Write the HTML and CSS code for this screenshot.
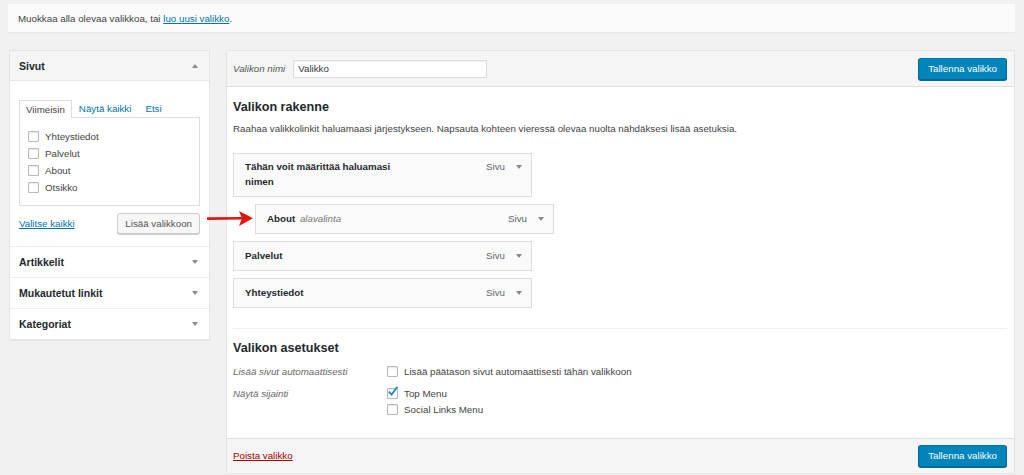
FILE: index.html
```html
<!DOCTYPE html>
<html lang="fi">
<head>
<meta charset="utf-8">
<title>Valikot</title>
<link rel="stylesheet" href="styles.css">
</head>
<body>
<div class="notice"><p>Muokkaa alla olevaa valikkoa, tai <a href="#">luo uusi valikko</a>.</p></div>

<div class="main">
  <aside class="sidebar">
    <div class="acc open">
      <div class="acc-head">Sivut <span class="tri up"></span></div>
      <div class="acc-body">
        <div class="tabs">
          <span class="tab active">Viimeisin</span>
          <a class="tab" href="#">Näytä kaikki</a>
          <a class="tab" href="#">Etsi</a>
        </div>
        <div class="tabpanel">
          <label class="cb-row"><span class="cb"></span>Yhteystiedot</label>
          <label class="cb-row"><span class="cb"></span>Palvelut</label>
          <label class="cb-row"><span class="cb"></span>About</label>
          <label class="cb-row"><span class="cb"></span>Otsikko</label>
        </div>
        <div class="actions">
          <a href="#">Valitse kaikki</a>
          <button class="btn">Lisää valikkoon</button>
        </div>
      </div>
    </div>
    <div class="acc"><div class="acc-head">Artikkelit <span class="tri"></span></div></div>
    <div class="acc"><div class="acc-head">Mukautetut linkit <span class="tri"></span></div></div>
    <div class="acc"><div class="acc-head">Kategoriat <span class="tri"></span></div></div>
  </aside>

  <section class="editor">
    <div class="ed-head">
      <label class="name-label">Valikon nimi</label>
      <input class="name-input" type="text" value="Valikko">
      <button class="btn primary">Tallenna valikko</button>
    </div>
    <div class="ed-body">
      <h3>Valikon rakenne</h3>
      <p class="desc">Raahaa valikkolinkit haluamaasi järjestykseen. Napsauta kohteen vieressä olevaa nuolta nähdäksesi lisää asetuksia.</p>
      <ul class="menu">
        <li class="item"><span class="title">Tähän voit määrittää haluamasi nimen</span><span class="controls"><span class="type">Sivu</span><span class="tri"></span></span></li>
        <li class="item sub"><span class="title">About <i class="subtitle">alavalinta</i></span><span class="controls"><span class="type">Sivu</span><span class="tri"></span></span></li>
        <li class="item"><span class="title">Palvelut</span><span class="controls"><span class="type">Sivu</span><span class="tri"></span></span></li>
        <li class="item"><span class="title">Yhteystiedot</span><span class="controls"><span class="type">Sivu</span><span class="tri"></span></span></li>
      </ul>
      <div class="settings">
        <h3>Valikon asetukset</h3>
        <div class="row">
          <div class="lbl">Lisää sivut automaattisesti</div>
          <div class="opts">
            <label class="cb-row"><span class="cb"></span>Lisää päätason sivut automaattisesti tähän valikkoon</label>
          </div>
        </div>
        <div class="row">
          <div class="lbl">Näytä sijainti</div>
          <div class="opts">
            <label class="cb-row"><span class="cb checked"><svg viewBox="0 0 12 12" width="12" height="12"><path d="M1.8 5.6 L4.6 8.6 L10.4 0.8" fill="none" stroke="#1e8cbe" stroke-width="1.8"/></svg></span>Top Menu</label>
            <label class="cb-row"><span class="cb"></span>Social Links Menu</label>
          </div>
        </div>
      </div>
    </div>
    <div class="ed-foot">
      <a class="delete" href="#">Poista valikko</a>
      <button class="btn primary">Tallenna valikko</button>
    </div>
  </section>
</div>

<svg class="arrow" width="50" height="20" viewBox="0 0 50 20">
  <path d="M1 9.6 L36 9.2" stroke="#e3150f" stroke-width="2.6" fill="none"/>
  <path d="M33 2 L47 9.3 L33 17 L36 9.3 Z" fill="#e3150f"/>
</svg>
</body>
</html>
```

FILE: styles.css
```css
body {
  margin: 0;
  background: #f1f1f1;
  font-family: "Liberation Sans", Arial, sans-serif;
  font-size: 9.75px;
  color: #444;
}

a {
  color: #0073aa;
  text-decoration: underline;
}

.notice {
  margin: 4px 9px 0 8px;
  height: 28px;
  box-sizing: border-box;
  background: #fbfbfb;
  box-shadow: 0 1px 1px rgba(0, 0, 0, 0.04);
  display: flex;
  align-items: center;
  padding-left: 10px;
}

.notice p {
  margin: 0;
}

.main {
  display: flex;
  align-items: flex-start;
  gap: 16px;
  margin: 18px 9px 0 9px;
}

/* Sidebar */
.sidebar {
  width: 201px;
  box-sizing: border-box;
  background: #fff;
  border: 1px solid #e5e5e5;
  box-shadow: 0 1px 1px rgba(0, 0, 0, 0.04);
}

.acc-head {
  height: 31px;
  box-sizing: border-box;
  display: flex;
  align-items: center;
  justify-content: space-between;
  padding: 0 11px 0 9px;
  font-size: 10.5px;
  font-weight: bold;
  color: #23282d;
  border-top: 1px solid #eee;
}

.acc.open .acc-head {
  height: 30px;
  border-top: none;
  border-bottom: 1px solid #e5e5e5;
  background: #f5f5f5;
}

.tri {
  width: 0;
  height: 0;
  border-left: 3px solid transparent;
  border-right: 3px solid transparent;
  border-top: 4px solid #8a8a8a;
}

.tri.up {
  border-top: none;
  border-bottom: 4px solid #8a8a8a;
}

.acc-body {
  padding: 19px 9px 12px 9px;
}

.tabs {
  display: flex;
  height: 17px;
  align-items: flex-end;
}

.tab {
  padding: 0 7px;
  line-height: 16px;
  text-decoration: none;
  color: #0073aa;
}

.tab.active {
  position: relative;
  z-index: 1;
  padding: 0 6px;
  line-height: 17px;
  box-sizing: border-box;
  border: 1px solid #ddd;
  border-bottom: none;
  background: #fff;
  color: #444;
  margin-bottom: -1px;
  height: 18px;
}

.tabpanel {
  border: 1px solid #ddd;
  padding: 10px 8px 9px;
}

.cb-row {
  display: flex;
  align-items: center;
  line-height: 17px;
}

.cb {
  width: 11px;
  height: 11px;
  box-sizing: border-box;
  border: 1px solid #b4b9be;
  border-radius: 1px;
  background: #fff;
  box-shadow: inset 0 1px 2px rgba(0, 0, 0, 0.1);
  margin-right: 6px;
  flex: none;
  display: flex;
  align-items: center;
  justify-content: center;
  overflow: visible;
}

.cb svg {
  flex: none;
  margin-top: -3px;
  margin-left: 1px;
}

.actions {
  display: flex;
  align-items: center;
  justify-content: space-between;
  margin-top: 7px;
}

.btn {
  height: 21px;
  padding: 0 7px;
  font-family: inherit;
  font-size: 9.75px;
  color: #555;
  background: #f7f7f7;
  border: 1px solid #ccc;
  border-radius: 3px;
  box-shadow: 0 1px 0 #ccc;
}

.btn.primary {
  height: 22px;
  padding: 0 9px;
  color: #fff;
  background: #0085ba;
  border-color: #0073aa #006799 #006799;
  box-shadow: 0 1px 0 #006799;
}

/* Editor */
.editor {
  width: 789px;
  box-sizing: border-box;
  background: #fff;
  border: 1px solid #e5e5e5;
  box-shadow: 0 1px 1px rgba(0, 0, 0, 0.04);
}

.ed-head {
  height: 36px;
  box-sizing: border-box;
  display: flex;
  align-items: center;
  padding: 0 7px 0 6px;
  background: #f5f5f5;
  border-bottom: 1px solid #dfdfdf;
}

.name-label {
  font-style: italic;
  color: #555;
  margin-right: 8px;
}

.name-input {
  width: 194px;
  height: 18px;
  box-sizing: border-box;
  border: 1px solid #ddd;
  box-shadow: inset 0 1px 2px rgba(0, 0, 0, 0.07);
  padding: 0 4px;
  font-family: inherit;
  font-size: 9.75px;
  color: #32373c;
  background: #fff;
}

.ed-head .primary {
  margin-left: auto;
}

.ed-body {
  padding: 0 7px 20px 6px;
}

h3 {
  margin: 12px 0 7px;
  font-size: 12.6px;
  line-height: 16px;
  font-weight: bold;
  color: #23282d;
}

.desc {
  margin: 0 0 16px;
  line-height: 14.6px;
}

.menu {
  list-style: none;
  margin: 0;
  padding: 0;
}

.item {
  width: 299px;
  box-sizing: border-box;
  display: flex;
  align-items: flex-start;
  border: 1px solid #ddd;
  background: #fafafa;
  padding: 6.5px 9px 6.5px 11px;
  line-height: 14.5px;
  margin-bottom: 7.5px;
}

.item:last-child {
  margin-bottom: 0;
}

.item.sub {
  margin-left: 22px;
}

.title {
  max-width: 160px;
  font-weight: bold;
  color: #23282d;
}

.subtitle {
  font-weight: normal;
  color: #777;
  margin-left: 2px;
}

.controls {
  margin-left: auto;
  display: flex;
  align-items: center;
  gap: 11px;
  height: 14.5px;
}

.type {
  color: #666;
}

.settings {
  margin-top: 20px;
  border-top: 1px solid #eee;
}

.settings h3 {
  margin: 11px 0 8px;
}

.row {
  display: flex;
  margin-bottom: 6px;
}

.row:last-child {
  margin-bottom: 0;
}

.lbl {
  width: 154px;
  font-style: italic;
  color: #666;
  line-height: 16px;
}

.opts .cb-row {
  line-height: 16px;
}

.ed-foot {
  height: 35px;
  box-sizing: border-box;
  display: flex;
  align-items: center;
  justify-content: space-between;
  padding: 0 7px 0 6px;
  background: #f5f5f5;
  border-top: 1px solid #dfdfdf;
}

.delete {
  color: #a00;
}

.arrow {
  position: absolute;
  left: 206px;
  top: 209px;
}
```
